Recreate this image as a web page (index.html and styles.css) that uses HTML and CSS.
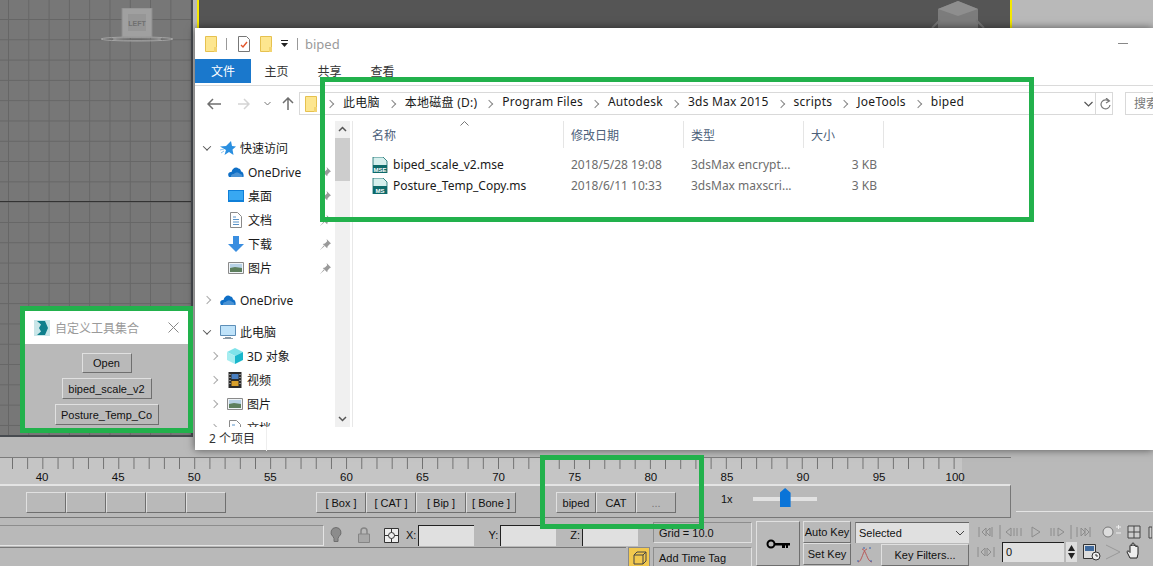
FILE: index.html
```html
<!DOCTYPE html>
<html lang="zh-CN">
<head>
  <meta charset="UTF-8" />
  <meta name="viewport" content="width=device-width, initial-scale=1.0"/>
  <title>biped</title>
  <link rel="stylesheet" href="styles.css">
</head>
<body>

  <svg class="sprite" aria-hidden="true">
    <symbol id="i-folder" viewBox="0 0 12 16"><path d="M.5.5h11v15H.5z" fill="#fde68f" stroke="#e6c14f"/><path d="M9 11h3v5H9z" fill="#f3d470"/></symbol>
    <symbol id="i-note" viewBox="0 0 12 16"><path d="M.5.5h8l3 3v12H.5z" fill="#fff" stroke="#777"/><path d="M3 9l2 2 4-5" fill="none" stroke="#e2552b" stroke-width="1.4"/></symbol>
    <symbol id="i-star" viewBox="0 0 16 16"><path d="M11 1l1 5 4 .5-3.500 3 1 5.500-4.500-3-4.500 3 1.500-5L0 6.500l6-.5z" fill="#2a8fe0"/><path d="M0 10l4-1M1 13l3-2" stroke="#8cc4ee"/></symbol>
    <symbol id="i-cloud" viewBox="0 0 16 12"><path d="M1 11C-1 8 1 5.500 3.500 6 4.500 2 8 .5 10.500 2.500 12 2.500 13 4 13 5.500c2 0 3 2.500 2.500 5.500z" fill="#0f6fc6"/><path d="M3 11c-.5-2 1-3.500 3-3 1-2 5-2 6 0 2 0 2.500 1.500 2.500 3z" fill="#fff" opacity=".25"/></symbol>
    <symbol id="i-desktop" viewBox="0 0 16 12"><path d="M0 0h16v12H0z" fill="#0f7fd8"/><path d="M1 1h14v9H1z" fill="#38a8f2"/></symbol>
    <symbol id="i-doc" viewBox="0 0 12 16"><path d="M.5.500h7l4 4v11H.5z" fill="#fff" stroke="#8a8a8a"/><path d="M3 5h3M3 7.500h6M3 10h6M3 12.500h6" stroke="#5a93c8"/></symbol>
    <symbol id="i-down" viewBox="0 0 16 16"><path d="M5 0h6v8h5l-8 8-8-8h5z" fill="#3a8ee0"/></symbol>
    <symbol id="i-pic" viewBox="0 0 16 12"><path d="M.5.500h15v11H.5z" fill="#eef3f6" stroke="#8a8a8a"/><path d="M2 2h12v4H2z" fill="#b8d2e6"/><path d="M2 6l5-1 7 1v4H2z" fill="#5d7f5d"/></symbol>
    <symbol id="i-pin" viewBox="0 0 10 10"><path d="M6 0l4 4-1 .5-2 2-.5 2L2.500 4.500l2-.5 2-2zM3.500 6L0 10l4-3.500z" fill="#9a9a9a"/></symbol>
    <symbol id="i-monitor" viewBox="0 0 16 14"><path d="M.5.500h15v10H.5z" fill="#bfe3fa" stroke="#5d8fb8"/><path d="M5 12h6v1H5zM3 13h10v1H3z" fill="#8a9aa6"/></symbol>
    <symbol id="i-cube" viewBox="0 0 16 16"><path d="M8 0l8 4-8 4-8-4z" fill="#7fe3ea"/><path d="M0 4l8 4v8l-8-4z" fill="#a6edf0"/><path d="M16 4L8 8v8l8-4z" fill="#19b6cb"/></symbol>
    <symbol id="i-film" viewBox="0 0 13 16"><path d="M0 0h13v16H0z" fill="#2c2c2c"/><path d="M3 2h7v5H3z" fill="#4a7fc0"/><path d="M3 9h7v5H3z" fill="#d8a02c"/><path d="M1 2h1v1H1zM1 5h1v1H1zM1 8h1v1H1zM1 11h1v1H1zM11 2h1v1h-1zM11 5h1v1h-1zM11 8h1v1h-1zM11 11h1v1h-1z" fill="#ddd"/></symbol>
    <symbol id="i-max" viewBox="0 0 16 16"><path d="M0 0h16v16H0z" fill="#c9e6e8"/><path d="M3 1h8l3 7-3 7H3l4-3.500L5 8l2-3.500z" fill="#0f7f8c"/></symbol>
    <symbol id="i-key" viewBox="0 0 24 10"><circle cx="5" cy="5" r="3.500" fill="none" stroke="#000" stroke-width="2"/><path d="M8 4h16v2.500h-2V9h-2V6.500h-1V9h-3V6.500H8z" fill="#000"/></symbol>
    <symbol id="i-bulb" viewBox="0 0 12 16"><path d="M6 .500a5 5 0 0 1 3 9l-1 2v3H4v-3l-1-2a5 5 0 0 1 3-9z" fill="#8c8c8c" stroke="#6f6f6f"/></symbol>
    <symbol id="i-lock" viewBox="0 0 12 16"><path d="M3 7V4a3 3 0 0 1 6 0v3" fill="none" stroke="#858585" stroke-width="1.500"/><path d="M.5 7h11v8.500H.5z" fill="#a8a8a8" stroke="#858585"/></symbol>
    <symbol id="i-snap" viewBox="0 0 15 15"><path d="M.5.500h14v14H.5z" fill="#eee" stroke="#333"/><circle cx="7.500" cy="7.500" r="3" fill="none" stroke="#333"/><path d="M7.500 1v3.500M7.500 10.500V14M1 7.500h3.500M10.500 7.500H14" stroke="#333"/></symbol>
  </svg>

  <div class="app">
    <div class="viewports">
      <div class="view-left">
        <svg class="gizmo-left" viewBox="0 0 74 34" width="74" height="34">
          <path d="M22 0h30v29H22z" fill="#a0a0a0" stroke="#8c8c8c"/>
          <path d="M28 6h18v17H28z" fill="#969696"/>
          <ellipse cx="37" cy="31" rx="36" ry="2" fill="none" stroke="#a4a4a4"/>
          <ellipse cx="37" cy="31" rx="24" ry="1.500" fill="none" stroke="#999"/>
          <text x="37" y="18" text-anchor="middle" class="gizmo-text">LEFT</text>
        </svg>
      </div>
      <div class="view-gap"></div>
      <div class="view-top">
        <svg class="gizmo-top" viewBox="0 0 60 28" width="60" height="28">
          <path d="M30 1l20 8v19H10V9z" fill="#7c7c7c"/>
          <path d="M30 1l20 8-20 7-20-7z" fill="#8e8e8e"/>
          <path d="M4 28L12 20M56 28L48 20" stroke="#777" stroke-width="2"/>
        </svg>
      </div>
    </div>

    <div class="time-wrap">
      <div class="timeline">
        <div class="ruler">
          <div class="ruler-labels">
            <span>40</span><span>45</span><span>50</span><span>55</span><span>60</span><span>65</span><span>70</span><span>75</span><span>80</span><span>85</span><span>90</span><span>95</span><span>100</span>
          </div>
        </div>
        <div class="track-row">
          <div class="btn-group group-empty">
            <button class="max-btn"></button><button class="max-btn"></button><button class="max-btn"></button><button class="max-btn"></button><button class="max-btn"></button>
          </div>
          <div class="btn-group group-rig">
            <button class="max-btn wide">[ Box ]</button><button class="max-btn wide">[ CAT ]</button><button class="max-btn wide">[ Bip ]</button><button class="max-btn wide">[ Bone ]</button>
          </div>
          <div class="btn-group group-tools">
            <button class="max-btn">biped</button><button class="max-btn">CAT</button><button class="max-btn muted">...</button>
          </div>
          <span class="speed">1x</span>
          <div class="slider"><span class="slider-thumb"></span></div>
        </div>
      </div>
      <div class="time-end"></div>
    </div>

    <div class="status">
      <div class="status-left">
        <div class="status-top">
          <div class="prompt"></div>
          <svg class="status-icon bulb"><use href="#i-bulb"/></svg>
          <svg class="status-icon lock"><use href="#i-lock"/></svg>
          <svg class="status-icon snap"><use href="#i-snap"/></svg>
          <label class="coord">X:<span class="coord-input"></span></label>
          <label class="coord">Y:<span class="coord-input"></span></label>
          <label class="coord">Z:<span class="coord-input"></span></label>
        </div>
        <div class="status-bottom">
          <div class="status-fill"></div>
          <div class="tag-icon">
            <svg viewBox="0 0 14 14" width="14" height="14"><path d="M1 4h9v9H1zM1 4l3-3h9v9l-3 3M10 4l3-3" fill="none" stroke="#444"/></svg>
          </div>
        </div>
      </div>

      <div class="grid-col">
        <div class="info-box">Grid = 10.0</div>
        <div class="info-box tag">Add Time Tag</div>
      </div>

      <div class="key-btn"><svg width="24" height="10"><use href="#i-key"/></svg></div>

      <div class="autokey-col">
        <div class="key-small">Auto Key</div>
        <div class="key-small">Set Key</div>
      </div>

      <div class="select-col">
        <div class="selected">Selected
          <svg width="10" height="6" viewBox="0 0 10 6"><path d="M1 1l4 4 4-4" fill="none" stroke="#444"/></svg>
        </div>
        <div class="filter-row">
          <svg class="curve" width="18" height="18" viewBox="0 0 18 18"><path d="M2 16C6 16 7 3 11 3M6 3c4 0 5 13 10 13" fill="none" stroke="#b85a5a"/><path d="M7 2h2M13 2h2M1 15h2M14 15h2" stroke="#3a62b0"/></svg>
          <div class="filter-btn">Key Filters...</div>
        </div>
      </div>

      <div class="nav-col">
        <div class="nav-row">
          <svg width="175" height="14" viewBox="0 0 175 14">
            <g fill="none" stroke="#8c8c8c">
              <path d="M2 2v10M15 2v10M9 3L5 7l4 4zM13 3L9 7l4 4z"/>
              <path d="M23 0v14"/>
              <path d="M34 3l-5 4 5 4zM37 3v8M40 3v8M44 3v8"/>
              <path d="M55 2l8 5-8 5z"/>
              <path d="M74 3v8M77 3v8M81 3l6 4-6 4z"/>
              <path d="M94 0v14"/>
              <path d="M100 2v10M113 2v10M104 3l4 4-4 4zM108 3l4 4-4 4z"/>
            </g>
            <circle cx="131" cy="7" r="5" fill="#ddd" stroke="#777"/>
            <path d="M139 2h5M141.500 0v4M139 8h5" stroke="#eee"/>
            <path d="M151 1h12v12h-12zM157 1v12M151 7h12" fill="#ccc" stroke="#444"/>
            <path d="M172 2h3v11h-3z" fill="#ccc" stroke="#444"/>
          </svg>
        </div>
        <div class="nav-row lower">
          <svg class="nav-mini" width="18" height="12" viewBox="0 0 18 12"><path d="M1 1v10M8 2L4 6l4 4zM10 2l4 4-4 4zM17 1v10" fill="none" stroke="#8c8c8c"/></svg>
          <div class="frame-input">0</div>
          <div class="spinner"><span class="spin-up"></span><span class="spin-down"></span></div>
          <svg class="nav-clock" width="18" height="18" viewBox="0 0 18 18"><path d="M.5 1.500h12v14H.5z" fill="#ddd" stroke="#333"/><path d="M2 3h9v5H2z" fill="#3f6a9e"/><circle cx="13" cy="13" r="4" fill="#eee" stroke="#333"/><path d="M13 11v2h2" stroke="#333" fill="none"/></svg>
          <svg class="nav-tri" width="16" height="16" viewBox="0 0 16 16"><path d="M1 1l14 7-14 7" fill="none" stroke="#999"/></svg>
          <svg class="nav-hand" width="16" height="18" viewBox="0 0 16 18"><path d="M4 16L1 10c0-1 1-1.500 2-.5l1 1V4c0-1.500 2-1.500 2 0V2c0-1.500 2-1.500 2 0v2c0-1.500 2-1.500 2 0v1c0-1.500 2-1.500 2 0v7l-1 4z" fill="#eee" stroke="#222"/></svg>
        </div>
      </div>
    </div>
  </div>

  <!-- 资源管理器 -->
  <div class="explorer">
    <div class="titlebar">
      <svg class="qa-folder"><use href="#i-folder"/></svg>
      <span class="qa-sep"></span>
      <svg class="qa-note"><use href="#i-note"/></svg>
      <svg class="qa-folder second"><use href="#i-folder"/></svg>
      <svg class="qa-drop" width="7" height="7" viewBox="0 0 7 7"><path d="M0 0h7v1H0zM0 3h7L3.500 7z" fill="#222"/></svg>
      <span class="qa-sep"></span>
      <span class="title-text">biped</span>
      <span class="win-min"></span>
    </div>

    <div class="tabs">
      <span class="tab active">文件</span>
      <span class="tab">主页</span>
      <span class="tab">共享</span>
      <span class="tab">查看</span>
    </div>

    <div class="addressbar">
      <svg class="nav-arrow" width="14" height="12" viewBox="0 0 14 12"><path d="M6 1L1 6l5 5M1 6h13" fill="none" stroke="#6f6f6f" stroke-width="1.500"/></svg>
      <svg class="nav-arrow fwd" width="12" height="12" viewBox="0 0 12 12"><path d="M6 1l5 5-5 5M11 6H0" fill="none" stroke="#d4d4d4" stroke-width="1.500"/></svg>
      <svg class="nav-arrow drop" width="7" height="5" viewBox="0 0 7 5"><path d="M.5 1l3 3 3-3" fill="none" stroke="#777"/></svg>
      <svg class="nav-arrow up" width="12" height="13" viewBox="0 0 12 13"><path d="M1 6l5-5 5 5M6 1v12" fill="none" stroke="#6f6f6f" stroke-width="1.500"/></svg>
      <div class="address">
        <svg class="addr-folder"><use href="#i-folder"/></svg>
        <span class="crumb">此电脑</span>
        <span class="crumb">本地磁盘 (D:)</span>
        <span class="crumb">Program Files</span>
        <span class="crumb">Autodesk</span>
        <span class="crumb">3ds Max 2015</span>
        <span class="crumb">scripts</span>
        <span class="crumb">JoeTools</span>
        <span class="crumb">biped</span>
        <svg class="addr-drop" width="9" height="6" viewBox="0 0 9 6"><path d="M.5 1l4 4 4-4" fill="none" stroke="#555" stroke-width="1.200"/></svg>
        <span class="addr-sep"></span>
        <svg class="addr-refresh" width="11" height="12" viewBox="0 0 11 12"><path d="M9 3.500A4.500 4.500 0 1 0 10 7M6 0l3.500 3L6 5" fill="none" stroke="#777" stroke-width="1.200"/></svg>
      </div>
      <div class="search">搜索</div>
    </div>

    <div class="ex-body">
      <ul class="sidebar">
        <li class="node top"><span class="caret open"></span><svg class="ni"><use href="#i-star"/></svg>快速访问</li>
        <li class="node sub"><svg class="ni"><use href="#i-cloud"/></svg>OneDrive<svg class="pin"><use href="#i-pin"/></svg></li>
        <li class="node sub"><svg class="ni"><use href="#i-desktop"/></svg>桌面<svg class="pin"><use href="#i-pin"/></svg></li>
        <li class="node sub"><svg class="ni"><use href="#i-doc"/></svg>文档<svg class="pin"><use href="#i-pin"/></svg></li>
        <li class="node sub"><svg class="ni"><use href="#i-down"/></svg>下载<svg class="pin"><use href="#i-pin"/></svg></li>
        <li class="node sub"><svg class="ni"><use href="#i-pic"/></svg>图片<svg class="pin"><use href="#i-pin"/></svg></li>
        <li class="node top spaced"><span class="caret"></span><svg class="ni"><use href="#i-cloud"/></svg>OneDrive</li>
        <li class="node top spaced"><span class="caret open"></span><svg class="ni"><use href="#i-monitor"/></svg>此电脑</li>
        <li class="node child"><span class="caret"></span><svg class="ni"><use href="#i-cube"/></svg>3D 对象</li>
        <li class="node child"><span class="caret"></span><svg class="ni"><use href="#i-film"/></svg>视频</li>
        <li class="node child"><span class="caret"></span><svg class="ni"><use href="#i-pic"/></svg>图片</li>
        <li class="node child"><span class="caret"></span><svg class="ni"><use href="#i-doc"/></svg>文档</li>
      </ul>
      <div class="side-scroll">
        <svg width="9" height="6" viewBox="0 0 9 6"><path d="M1 5l3.500-3.500L8 5" fill="none" stroke="#555" stroke-width="1.500"/></svg>
        <span class="side-thumb"></span>
        <svg class="scroll-down" width="9" height="6" viewBox="0 0 9 6"><path d="M1 1l3.500 3.500L8 1" fill="none" stroke="#555" stroke-width="1.500"/></svg>
      </div>
      <div class="files">
        <div class="file-row head">
          <span class="col-name">名称<svg class="sort" width="9" height="5" viewBox="0 0 9 5"><path d="M.5 4.500l4-4 4 4" fill="none" stroke="#777"/></svg></span>
          <span>修改日期</span>
          <span>类型</span>
          <span>大小</span>
        </div>
        <div class="file-row">
          <span class="col-name"><svg class="file-icon" viewBox="0 0 16 16"><path d="M1 0h10l4 4v12H1z" fill="#d5efed" stroke="#0d6a6a" stroke-width=".8"/><path d="M1 8h14v8H1z" fill="#0d6a6a"/><text x="8" y="15" text-anchor="middle" class="file-badge">MSE</text></svg>biped_scale_v2.mse</span>
          <span class="dim">2018/5/28 19:08</span>
          <span class="dim">3dsMax encrypt...</span>
          <span class="dim size">3 KB</span>
        </div>
        <div class="file-row">
          <span class="col-name"><svg class="file-icon" viewBox="0 0 16 16"><path d="M1 0h10l4 4v12H1z" fill="#d5efed" stroke="#0d6a6a" stroke-width=".8"/><path d="M1 8h14v8H1z" fill="#0d6a6a"/><text x="8" y="15" text-anchor="middle" class="file-badge">MS</text></svg>Posture_Temp_Copy.ms</span>
          <span class="dim">2018/6/11 10:33</span>
          <span class="dim">3dsMax maxscri...</span>
          <span class="dim size">3 KB</span>
        </div>
      </div>
    </div>

    <div class="ex-status"><span>2 个项目</span></div>
  </div>

  <!-- 工具窗口 -->
  <div class="tool-dialog">
    <div class="tool-title">
      <svg class="tool-logo"><use href="#i-max"/></svg>
      <span class="tool-name">自定义工具集合</span>
      <svg class="tool-close" width="11" height="11" viewBox="0 0 11 11"><path d="M.5.500l10 10M10.500.500l-10 10" stroke="#888"/></svg>
    </div>
    <div class="tool-body">
      <button class="max-btn tool-btn b1">Open</button>
      <button class="max-btn tool-btn b2">biped_scale_v2</button>
      <button class="max-btn tool-btn b3">Posture_Temp_Co</button>
    </div>
  </div>

  <!-- 绿色标注框 -->
  <div class="mark mark-files"></div>
  <div class="mark mark-tool"></div>
  <div class="mark mark-buttons"></div>

</body>
</html>
```

FILE: styles.css
```css
* {
  box-sizing: border-box;
}

html, body {
  margin: 0;
  padding: 0;
}

body {
  position: relative;
  width: 1153px;
  height: 566px;
  overflow: hidden;
  background-color: #b9b9b9;
  font-family: 'Liberation Sans', sans-serif;
  font-size: 11px;
  color: #111;
}

.sprite {
  display: none;
}

.app {
  display: flex;
  flex-direction: column;
  height: 566px;
}

/* viewports */
.viewports {
  display: flex;
  height: 437px;
  flex: none;
}

.view-left {
  position: relative;
  width: 193px;
  border-right: 2px solid #474b50;
  border-bottom: 2px solid #474b50;
  background-color: #777;
  background-image:
    linear-gradient(#333, #333),
    linear-gradient(to right, #666 1px, transparent 1px),
    linear-gradient(to bottom, #666 1px, transparent 1px);
  background-size: 100% 1px, 20.3px 20.3px, 20.3px 20.3px;
  background-position: 0 201px, 8px 19px, 8px 19px;
  background-repeat: no-repeat, repeat, repeat;
}

.gizmo-left {
  position: absolute;
  left: 100px;
  top: 8px;
}

.gizmo-text {
  font-family: 'Liberation Sans', sans-serif;
  font-size: 7px;
  font-weight: bold;
  fill: #707070;
}

.view-gap {
  width: 4px;
}

.view-top {
  position: relative;
  width: 815px;
  height: 28px;
  border-left: 2px solid #f5e900;
  border-right: 2px solid #f5e900;
  background-color: #555;
}

.gizmo-top {
  position: absolute;
  left: 729px;
  top: 0;
}

/* timeline */
.time-wrap {
  display: flex;
  flex: none;
  margin-top: 20px;
}

.timeline {
  width: 1011px;
  flex: none;
  border-top: 1px solid #7c7c7c;
}

.time-end {
  flex: 1;
  height: 55px;
  margin-left: 5px;
  border-bottom: 1px solid #e4e4e4;
}

.ruler {
  width: 962px;
  height: 26px;
  background-color: #c5c5c5;
  background-image: linear-gradient(to right, #6e6e6e 1px, transparent 1px);
  background-size: 15.2px 11px;
  background-position: 12px 0;
  background-repeat: repeat-x;
}

.ruler-labels {
  display: flex;
  padding: 12px 0 0 4px;
}

.ruler-labels span {
  width: 76.1px;
  flex: none;
  text-align: center;
  font-size: 11.5px;
  line-height: 14px;
}

.track-row {
  display: flex;
  align-items: flex-start;
  height: 34px;
  padding-top: 6px;
  border-top: 2px solid #e4e4e4;
  border-bottom: 1px solid #777;
  border-right: 1px solid #777;
}

.btn-group {
  display: flex;
  flex: none;
}

.group-empty {
  margin-left: 26px;
}

.group-rig {
  margin-left: 90px;
}

.group-tools {
  margin-left: 40px;
}

.max-btn {
  width: 40px;
  height: 21px;
  padding: 0;
  background-color: #b9b9b9;
  border: 1px solid;
  border-color: #e0e0e0 #6f6f6f #6f6f6f #e0e0e0;
  font-family: 'Liberation Sans', sans-serif;
  font-size: 11px;
  color: #111;
}

.max-btn.wide {
  width: 50px;
}

.max-btn.muted {
  color: #777;
}

.speed {
  margin-left: 45px;
  line-height: 15px;
}

.slider {
  position: relative;
  width: 64px;
  height: 4px;
  margin: 5px 0 0 20px;
  background-color: #e2e2e2;
}

.slider-thumb {
  position: absolute;
  left: 27px;
  top: -9px;
  width: 11px;
  height: 19px;
  background-color: #0a74d8;
  clip-path: polygon(50% 0, 100% 25%, 100% 100%, 0 100%, 0 25%);
}

/* status */
.status {
  display: flex;
  flex: 1;
  height: 48px;
}

.status-left {
  width: 653px;
  flex: none;
  display: flex;
  flex-direction: column;
}

.status-top {
  display: flex;
  align-items: center;
  height: 29px;
  padding-top: 5px;
}

.prompt {
  width: 324px;
  height: 21px;
  flex: none;
  border-right: 1px solid #e4e4e4;
  border-bottom: 1px solid #e4e4e4;
  border-top: 1px solid #8d8d8d;
}

.status-icon {
  flex: none;
}

.bulb {
  width: 12px;
  height: 16px;
  margin-left: 6px;
}

.lock {
  width: 12px;
  height: 16px;
  margin-left: 16px;
}

.snap {
  width: 15px;
  height: 15px;
  margin-left: 14px;
}

.coord {
  display: flex;
  align-items: center;
  gap: 2px;
  margin-left: 14px;
  line-height: 20px;
}

.coord:first-of-type {
  margin-left: 7px;
}

.coord-input {
  display: block;
  width: 56px;
  height: 21px;
  background-color: #e0e0e0;
  border-top: 1px solid #222;
  border-left: 1px solid #222;
}

.status-bottom {
  display: flex;
  height: 19px;
}

.status-fill {
  width: 626px;
  flex: none;
  border-top: 1px solid #777;
}

.tag-icon {
  width: 22px;
  height: 20px;
  flex: none;
  margin-left: 2px;
  padding: 3px 0 0 4px;
  background-color: #f2c84e;
  border: 1px solid #8a8a8a;
}

.grid-col {
  width: 99px;
  flex: none;
  padding-top: 4px;
}

.info-box {
  height: 21px;
  padding-left: 5px;
  line-height: 20px;
  border: 1px solid;
  border-color: #8d8d8d #e0e0e0 #e0e0e0 #8d8d8d;
}

.info-box.tag {
  margin-top: 4px;
}

.key-btn {
  display: flex;
  align-items: center;
  justify-content: center;
  width: 44px;
  height: 45px;
  flex: none;
  margin: 3px 0 0 4px;
  border: 1px solid;
  border-color: #e0e0e0 #6f6f6f #6f6f6f #e0e0e0;
}

.autokey-col {
  width: 48px;
  flex: none;
  margin: 3px 0 0 3px;
}

.key-small {
  height: 22px;
  text-align: center;
  line-height: 21px;
  white-space: nowrap;
  border: 1px solid;
  border-color: #e0e0e0 #6f6f6f #6f6f6f #e0e0e0;
}

.select-col {
  width: 114px;
  flex: none;
  margin: 4px 0 0 4px;
}

.selected {
  display: flex;
  align-items: center;
  justify-content: space-between;
  height: 21px;
  padding: 0 4px 0 3px;
  background-color: #e0e0e0;
  border-top: 1px solid #666;
  border-left: 1px solid #888;
}

.filter-row {
  display: flex;
  align-items: flex-start;
  margin-top: 1px;
}

.curve {
  width: 18px;
  margin: 2px 7px 0 1px;
  flex: none;
}

.filter-btn {
  flex: 1;
  height: 22px;
  text-align: center;
  line-height: 21px;
  border: 1px solid;
  border-color: #e0e0e0 #6f6f6f #6f6f6f #e0e0e0;
}

.nav-col {
  flex: none;
  margin-left: 8px;
}

.nav-row {
  display: flex;
  height: 15px;
  margin-top: 7px;
}

.nav-row.lower {
  align-items: flex-start;
  height: 22px;
  margin-top: 1px;
}

.nav-mini {
  margin-top: 5px;
}

.frame-input {
  width: 62px;
  height: 20px;
  margin: 1px 0 0 7px;
  padding-left: 3px;
  line-height: 19px;
  background-color: #e0e0e0;
  border-top: 1px solid #222;
  border-left: 1px solid #222;
}

.spinner {
  display: flex;
  flex-direction: column;
  gap: 2px;
  width: 11px;
  height: 20px;
  margin: 1px 0 0 2px;
  background-color: #ddd;
  padding: 3px 2px;
}

.spin-up,
.spin-down {
  display: block;
  width: 7px;
  height: 6px;
  background-color: #222;
}

.spin-up {
  clip-path: polygon(50% 0, 100% 100%, 0 100%);
}

.spin-down {
  clip-path: polygon(0 0, 100% 0, 50% 100%);
}

.nav-clock {
  margin: 2px 0 0 6px;
}

.nav-tri {
  margin: 3px 0 0 4px;
}

.nav-hand {
  margin: 1px 0 0 5px;
}

/* explorer window */
.explorer {
  position: absolute;
  left: 195px;
  top: 28px;
  width: 958px;
  height: 422px;
  display: flex;
  flex-direction: column;
  background-color: #fff;
  box-shadow: 0 0 8px rgba(0,0,0,0.55);
  font-family: 'Noto Sans', 'Noto Sans CJK SC', sans-serif;
  font-size: 12px;
  color: #1a1a1a;
}

.titlebar {
  display: flex;
  align-items: center;
  height: 31px;
  flex: none;
  padding-left: 10px;
}

.qa-folder {
  width: 12px;
  height: 16px;
  flex: none;
}

.qa-folder.second {
  margin-left: 10px;
}

.qa-note {
  width: 12px;
  height: 16px;
  margin-left: 11px;
  flex: none;
}

.qa-drop {
  margin-left: 9px;
  flex: none;
}

.qa-sep {
  width: 1px;
  height: 12px;
  margin-left: 9px;
  background-color: #999;
  flex: none;
}

.title-text {
  margin-left: 7px;
  color: #9a9a9a;
  font-size: 13px;
}

.win-min {
  width: 10px;
  height: 1px;
  margin-left: auto;
  margin-right: 25px;
  background-color: #888;
}

.tabs {
  display: flex;
  height: 27px;
  flex: none;
  align-items: flex-start;
  border-bottom: 1px solid #dadada;
}

.tab {
  width: 53px;
  height: 24px;
  line-height: 25px;
  text-align: center;
  color: #333;
}

.tab.active {
  width: 56px;
  margin-right: -1px;
  background-color: #1a78cc;
  color: #fff;
}

.addressbar {
  display: flex;
  align-items: center;
  height: 35px;
  flex: none;
  padding-left: 12px;
}

.nav-arrow {
  flex: none;
}

.nav-arrow.fwd {
  margin-left: 17px;
}

.nav-arrow.drop {
  margin-left: 14px;
}

.nav-arrow.up {
  margin-left: 11px;
}

.address {
  display: flex;
  align-items: center;
  width: 814px;
  height: 23px;
  margin-left: 5px;
  padding-left: 5px;
  border: 1px solid #d9d9d9;
  flex: none;
}

.addr-folder {
  width: 12px;
  height: 16px;
  margin-right: 1px;
  flex: none;
}

.crumb {
  display: flex;
  align-items: center;
  padding-bottom: 4px;
  white-space: nowrap;
  letter-spacing: 0.25px;
  color: #1a1a1a;
}

.crumb::before {
  content: "";
  width: 5px;
  height: 5px;
  margin: 4px 10px 0 9px;
  border-top: 1.5px solid #888;
  border-right: 1.5px solid #888;
  transform: rotate(45deg);
}

.addr-drop {
  margin-left: auto;
}

.addr-sep {
  width: 1px;
  height: 21px;
  margin: 0 4px 0 2px;
  background-color: #d9d9d9;
}

.addr-refresh {
  margin-right: 1px;
}

.search {
  width: 40px;
  height: 23px;
  margin-left: 12px;
  padding-left: 8px;
  line-height: 22px;
  color: #777;
  border: 1px solid #d9d9d9;
  border-right: none;
  flex: none;
}

.ex-body {
  display: flex;
  height: 306px;
  flex: none;
}

.sidebar {
  width: 140px;
  flex: none;
  margin: 0;
  padding: 15px 0 0;
  list-style: none;
  overflow: hidden;
}

.node {
  display: flex;
  align-items: center;
  height: 24px;
  white-space: nowrap;
}

.node.spaced {
  margin-top: 8px;
}

.node.top {
  padding-left: 8px;
}

.node.sub {
  padding-left: 33px;
}

.node.child {
  padding-left: 15px;
}

.ni {
  width: 16px;
  height: 16px;
  margin-right: 4px;
  flex: none;
}

.caret {
  width: 6px;
  height: 6px;
  margin: 0 10px 0 1px;
  flex: none;
  border-top: 1.5px solid #aaa;
  border-right: 1.5px solid #aaa;
  transform: rotate(45deg);
}

.caret.open {
  border-color: #555;
  transform: rotate(135deg) translate(-1px, 1px);
}

.pin {
  width: 11px;
  height: 11px;
  margin-left: auto;
  margin-right: 4px;
  flex: none;
}

.side-scroll {
  display: flex;
  flex-direction: column;
  align-items: center;
  width: 15px;
  height: 306px;
  flex: none;
  padding-top: 5px;
  background-color: #f0f0f0;
}

.side-thumb {
  width: 15px;
  height: 43px;
  margin-top: 6px;
  background-color: #cdcdcd;
}

.scroll-down {
  margin-top: auto;
  margin-bottom: 5px;
}

.files {
  flex: 1;
  margin-left: 2px;
  border-left: 1px solid #e8e8e8;
}

.file-row {
  display: grid;
  grid-template-columns: 211px 120px 120px 80px;
  align-items: center;
  height: 21px;
}

.file-row > span {
  padding-left: 7px;
}

.file-row > .col-name {
  display: flex;
  align-items: center;
  padding-left: 19px;
  white-space: nowrap;
}

.file-row.head {
  height: 27px;
  margin-bottom: 6px;
  color: #4c607a;
}

.file-row.head > span {
  display: flex;
  align-items: center;
  position: relative;
  height: 27px;
  border-right: 1px solid #e5e5e5;
}

.sort {
  position: absolute;
  left: 107px;
  top: 0;
}

.file-icon {
  width: 16px;
  height: 16px;
  margin-right: 5px;
  flex: none;
}

.file-badge {
  font-family: 'Liberation Sans', sans-serif;
  font-size: 6px;
  font-weight: bold;
  fill: #fff;
}

.dim {
  color: #6d6d6d;
  white-space: nowrap;
}

.file-row > .size {
  padding-right: 7px;
  text-align: right;
}

.ex-status {
  height: 23px;
  padding-left: 14px;
  line-height: 24px;
  color: #333;
}

.ex-status span {
  display: block;
  width: 58px;
  border-right: 1px solid #eee;
}

/* tool dialog */
.tool-dialog {
  position: absolute;
  left: 24px;
  top: 311px;
  width: 165px;
  height: 118px;
  display: flex;
  flex-direction: column;
  background-color: #b9b9b9;
}

.tool-title {
  display: flex;
  align-items: center;
  height: 33px;
  padding-left: 10px;
  background-color: #fff;
  flex: none;
}

.tool-logo {
  width: 16px;
  height: 16px;
  flex: none;
}

.tool-name {
  margin-left: 5px;
  font-family: 'Noto Sans CJK SC', sans-serif;
  font-size: 12px;
  color: #9a9a9a;
}

.tool-close {
  margin-left: auto;
  margin-right: 10px;
}

.tool-body {
  display: flex;
  flex-direction: column;
  align-items: center;
  padding-top: 9px;
  gap: 5px;
}

.tool-btn {
  height: 20px;
}

.tool-btn.b1 {
  width: 50px;
}

.tool-btn.b2 {
  width: 90px;
  height: 21px;
}

.tool-btn.b3 {
  width: 104px;
  height: 21px;
}

/* annotation boxes */
.mark {
  position: absolute;
  border: 5px solid #22b14c;
  pointer-events: none;
}

.mark-files {
  left: 320px;
  top: 77px;
  width: 714px;
  height: 145px;
}

.mark-tool {
  left: 20px;
  top: 306px;
  width: 173px;
  height: 127px;
}

.mark-buttons {
  left: 540px;
  top: 455px;
  width: 164px;
  height: 74px;
}
```
